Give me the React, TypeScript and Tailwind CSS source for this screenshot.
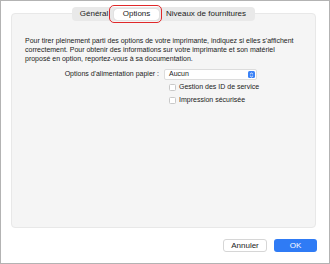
import React from 'react';

function Tabs() {
  return (
    <div className="relative z-10 flex justify-center w-[305px] -mb-[8px]">
      <div className="flex items-center h-[14px] rounded-[4px] bg-[#e9e9e9] px-[2px] text-[8px] text-[#222]">
        <div className="w-[40px] text-center">Général</div>
        <div className="relative w-[45px] h-[11px] rounded-[3px] bg-white shadow-[0_0_1px_rgba(0,0,0,0.3)] flex items-center justify-center">
          Options
          <div className="absolute -left-[5px] -right-[3px] -top-[4px] -bottom-[3px] rounded-[5px] border-[1.5px] border-[#e0282a]"></div>
        </div>
        <div className="w-[94px] text-center">Niveaux de fournitures</div>
      </div>
    </div>
  );
}

function Checkbox({ label }: { label: string }) {
  return (
    <div className="flex items-center gap-[3px] h-[13px]">
      <div className="w-[7px] h-[7px] rounded-[1.5px] bg-white border border-[#c8c8c8]"></div>
      <span>{label}</span>
    </div>
  );
}

export default function App() {
  return (
    <div className="w-[330px] h-[264px] border border-[#b3b3b3] bg-white flex flex-col pl-[10px] pt-[6px] text-[#222]" style={{ fontFamily: '"Liberation Sans", Arial, sans-serif' }}>
      <Tabs />
      <div className="w-[305px] h-[215px] rounded-[4px] bg-[#f5f5f5] border border-[#e8e8e8] pt-[22px] pl-[13px] text-[7px]">
        <p className="leading-[9px] w-[285px]">
          Pour tirer pleinement parti des options de votre imprimante, indiquez si elles s'affichent<br />
          correctement. Pour obtenir des informations sur votre imprimante et son matériel<br />
          proposé en option, reportez-vous à sa documentation.
        </p>
        <div className="flex items-center mt-[6px]">
          <div className="w-[139px] text-right pr-[5px]">Options d'alimentation papier :</div>
          <div className="w-[93px] h-[11px] bg-white border border-[#dcdcdc] rounded-[2px] flex items-center justify-between pl-[4px] pr-[1px]">
            <span>Aucun</span>
            <div className="w-[7px] h-[7px] rounded-[1.5px] bg-[#3b82f6] flex items-center justify-center">
              <svg width="5" height="6" viewBox="0 0 5 6">
                <path d="M1 2.2 L2.5 1 L4 2.2 M1 3.8 L2.5 5 L4 3.8" stroke="white" strokeWidth="0.8" fill="none" />
              </svg>
            </div>
          </div>
        </div>
        <div className="pl-[144px] mt-[1px]">
          <Checkbox label="Gestion des ID de service" />
          <Checkbox label="Impression sécurisée" />
        </div>
      </div>
      <div className="flex justify-end gap-[7px] pr-[12px] mt-[11px] text-[8px]">
        <div className="w-[44px] h-[13px] rounded-[3px] bg-white border border-[#d6d6d6] flex items-center justify-center">Annuler</div>
        <div className="w-[43px] h-[13px] rounded-[3px] bg-[#2f7bf5] text-white flex items-center justify-center">OK</div>
      </div>
    </div>
  );
}
